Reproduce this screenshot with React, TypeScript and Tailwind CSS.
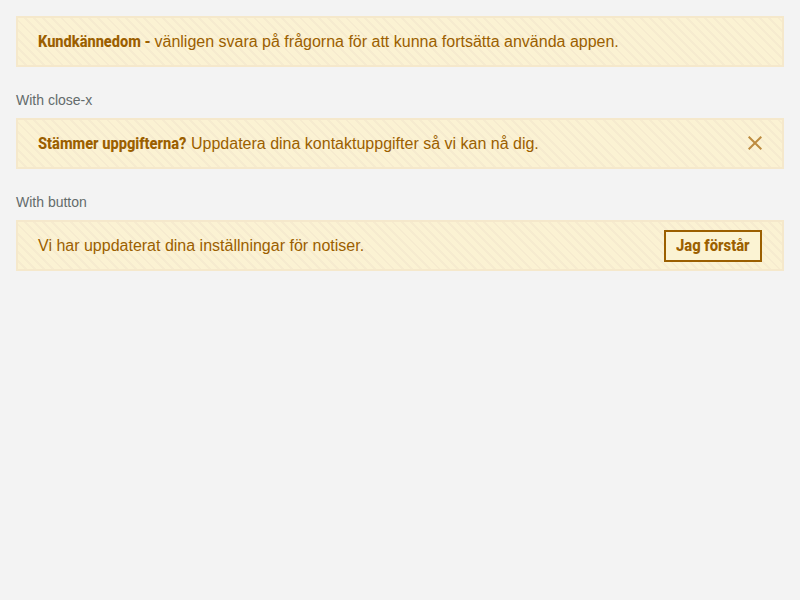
import type { ReactNode } from "react";

function Strong({ children, className }: { children: ReactNode; className: string }) {
  return (
    <strong className={`inline-block origin-left whitespace-nowrap font-['Roboto',sans-serif] text-base font-extrabold ${className}`}>
      {children}
    </strong>
  );
}

function Banner({ children, action }: { children: ReactNode; action?: ReactNode }) {
  return (
    <div className="flex h-[51px] items-center justify-between border-2 border-[#f5e8cb] bg-[repeating-linear-gradient(45deg,#fbf2d3_0px,#fbf2d3_4.5px,#f6ebcf_4.5px,#f6ebcf_6.5px)] px-5 text-base leading-6 text-[#9b5f00]">
      <p className="flex whitespace-nowrap">{children}</p>
      {action}
    </div>
  );
}

function Label({ children }: { children: ReactNode }) {
  return <p className="mt-6 mb-2 h-[19px] text-sm leading-[19px] text-[#636b6b]">{children}</p>;
}

export default function App() {
  return (
    <main className="min-h-screen bg-[#f3f3f3] p-4 font-['Liberation_Sans',Arial,sans-serif]">
      <Banner>
        <Strong className="w-[116.5px] scale-x-[0.912]">Kundkännedom -</Strong>
        <span>vänligen svara på frågorna för att kunna fortsätta använda appen.</span>
      </Banner>
      <Label>With close-x</Label>
      <Banner
        action={
          <button aria-label="Stäng" className="mb-0.5 text-[#bd8b3f]">
            <svg width="14" height="14" viewBox="0 0 14 14" className="block" stroke="currentColor" strokeWidth="2">
              <path d="M0.7 0.7 13.3 13.3M13.3 0.7 0.7 13.3" />
            </svg>
          </button>
        }
      >
        <Strong className="w-[153px] scale-x-[0.915]">Stämmer uppgifterna?</Strong>
        <span>Uppdatera dina kontaktuppgifter så vi kan nå dig.</span>
      </Banner>
      <Label>With button</Label>
      <Banner
        action={
          <button className="flex h-8 w-[98px] items-center border-2 border-[#9b5f00] bg-[#fbf3d3] px-2.5">
            <Strong className="w-[74px] scale-x-[0.925]">Jag förstår</Strong>
          </button>
        }
      >
        <span>Vi har uppdaterat dina inställningar för notiser.</span>
      </Banner>
    </main>
  );
}
